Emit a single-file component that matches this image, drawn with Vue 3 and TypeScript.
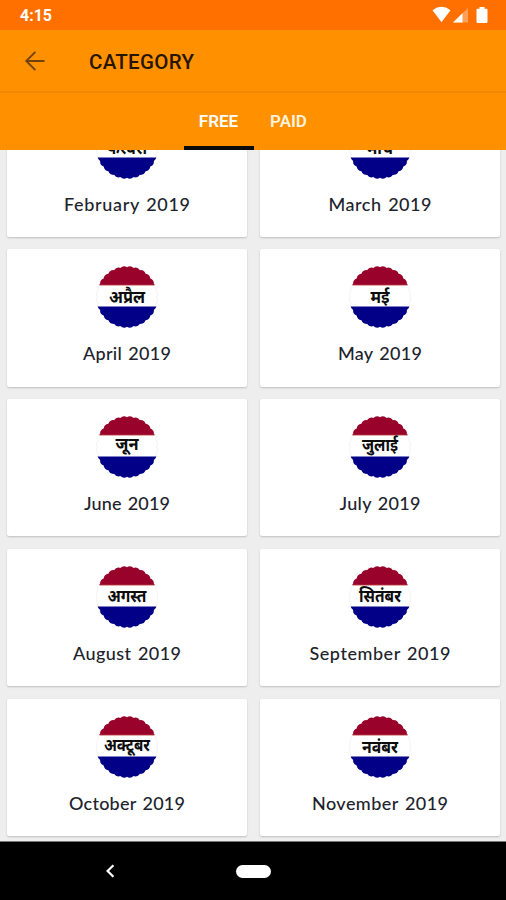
<script setup lang="ts">
interface Month {
  label: string
  labelWidth: number
  hindi: string
  hindiWidth: number
  baseline: number
}

const months: Month[] = [
  { label: 'February 2019', labelWidth: 126, hindi: 'फरवरी', hindiWidth: 40, baseline: 36.5 },
  { label: 'March 2019', labelWidth: 103, hindi: 'मार्च', hindiWidth: 26, baseline: 36.5 },
  { label: 'April 2019', labelWidth: 88, hindi: 'अप्रैल', hindiWidth: 36, baseline: 37 },
  { label: 'May 2019', labelWidth: 84, hindi: 'मई', hindiWidth: 19, baseline: 37 },
  { label: 'June 2019', labelWidth: 86, hindi: 'जून', hindiWidth: 23, baseline: 34 },
  { label: 'July 2019', labelWidth: 81, hindi: 'जुलाई', hindiWidth: 36, baseline: 35 },
  { label: 'August 2019', labelWidth: 108, hindi: 'अगस्त', hindiWidth: 39, baseline: 36 },
  { label: 'September 2019', labelWidth: 141, hindi: 'सितंबर', hindiWidth: 42, baseline: 36 },
  { label: 'October 2019', labelWidth: 116, hindi: 'अक्टूबर', hindiWidth: 46, baseline: 34.5 },
  { label: 'November 2019', labelWidth: 136, hindi: 'नवंबर', hindiWidth: 36, baseline: 37 },
]

// Scalloped outline of the badge: a ring of shallow outward arcs.
const scallops = 28
const point = (i: number): string => {
  const a = (i / scallops) * Math.PI * 2
  return `${(31 + 29.8 * Math.cos(a)).toFixed(2)} ${(31 + 29.8 * Math.sin(a)).toFixed(2)}`
}
const outline =
  `M${point(0)}` +
  Array.from({ length: scallops }, (_, i) => `A5.5 5.5 0 0 1 ${point(i + 1)}`).join('') +
  'Z'
</script>

<template>
  <div class="screen">
    <header class="status">
      <span class="clock">4:15</span>
      <svg class="indicators" width="58" height="20" viewBox="0 0 58 20">
        <path d="M1.5 5.2Q10.5-1.5 19.5 5.2L10.8 16.8Q10.5 17.2 10.2 16.8Z" fill="#fff" />
        <path d="M37 3V17.5H22Z" fill="#ff9f58" />
        <path d="M31.5 8.2V17.5H22Z" fill="#fff" />
        <path d="M48.5 2h5v1.8h2q1 0 1 1v12q0 1.2-1.2 1.2h-8.6q-1.2 0-1.2-1.2v-12q0-1 1-1h2z" fill="#fff" />
      </svg>
    </header>
    <div class="toolbar">
      <svg class="back" width="22" height="22" viewBox="0 0 22 22">
        <path d="M20.5 11H2.2M11.4 1.8L2.2 11L11.4 20.2" fill="none" stroke="#70420a" stroke-width="1.8" />
      </svg>
      <h1 class="title">CATEGORY</h1>
    </div>
    <nav class="tabs">
      <button class="tab active">FREE</button>
      <button class="tab">PAID</button>
    </nav>
    <main class="list">
      <div class="grid">
        <article v-for="m in months" :key="m.label" class="card">
          <svg class="badge" width="62" height="62" viewBox="0 0 62 62">
            <defs>
              <clipPath :id="'top-' + m.labelWidth"><rect width="62" height="19" /></clipPath>
              <clipPath :id="'bottom-' + m.labelWidth"><rect y="40.4" width="62" height="22" /></clipPath>
            </defs>
            <path :d="outline" fill="#fff" stroke="#ededf0" stroke-width=".7" />
            <path :d="outline" fill="#98022b" :clip-path="`url(#top-${m.labelWidth})`" />
            <path :d="outline" fill="#020087" :clip-path="`url(#bottom-${m.labelWidth})`" />
            <path d="M3.5 19.2H58.5" stroke="#c9655a" stroke-width=".8" />
            <text
              class="hindi"
              :x="31 - m.hindiWidth / 2"
              :y="m.baseline"
              :textLength="m.hindiWidth"
              lengthAdjust="spacingAndGlyphs"
            >{{ m.hindi }}</text>
          </svg>
          <svg class="caption" width="200" height="30" viewBox="0 0 200 30">
            <text
              class="label"
              :x="100 - m.labelWidth / 2"
              y="20"
              :textLength="m.labelWidth"
              lengthAdjust="spacing"
            >{{ m.label }}</text>
          </svg>
        </article>
      </div>
    </main>
    <footer class="navbar">
      <svg class="nav-back" width="12" height="16" viewBox="0 0 12 16">
        <path d="M9.4 2.2L3.6 8L9.4 13.8" fill="none" stroke="#fff" stroke-width="2.2" />
      </svg>
      <span class="home"></span>
      <span class="nav-space"></span>
    </footer>
  </div>
</template>

<style>
body {
  margin: 0;
}
</style>

<style scoped>
.screen {
  display: flex;
  flex-direction: column;
  width: 506px;
  height: 900px;
  overflow: hidden;
  background: #eee;
  font-family: Roboto, 'Liberation Sans', sans-serif;
}
.status {
  flex: none;
  display: flex;
  align-items: center;
  justify-content: space-between;
  box-sizing: border-box;
  height: 30px;
  padding: 2px 17px 0 20px;
  background: #ff7000;
}
.clock {
  color: #fff;
  font-size: 16px;
  font-weight: 700;
  line-height: 28px;
}
.indicators {
  margin-top: -3px;
}
.toolbar {
  flex: none;
  display: flex;
  align-items: center;
  box-sizing: border-box;
  height: 63px;
  padding-left: 24px;
  background: #ff9100;
  border-bottom: 2px solid #f48702;
}
.title {
  margin: 2px 0 0 43px;
  color: #261500;
  font-size: 20.5px;
  font-weight: 500;
  letter-spacing: 0.3px;
  line-height: 24px;
}
.tabs {
  flex: none;
  display: flex;
  justify-content: center;
  height: 57px;
  padding-left: 1px;
  background: #ff9100;
}
.tab {
  box-sizing: border-box;
  width: 70px;
  height: 57px;
  padding: 3px 0 0;
  border: 0;
  border-bottom: 4px solid transparent;
  background: none;
  color: #fff2df;
  font-family: inherit;
  font-size: 17px;
  font-weight: 600;
}
.tab.active {
  border-bottom-color: #0b0b0b;
  color: #fff;
}
.list {
  flex: 1;
  min-height: 0;
  display: flex;
  flex-direction: column;
  justify-content: flex-end;
  overflow: hidden;
  padding: 0 6px 5px 7px;
  border-bottom: 1px solid #777;
}
.grid {
  flex: none;
  display: grid;
  grid-template-columns: 240px 240px;
  column-gap: 13px;
  row-gap: 12.5px;
}
.card {
  display: flex;
  flex-direction: column;
  align-items: center;
  box-sizing: border-box;
  height: 137.3px;
  padding-top: 17px;
  background: #fff;
  border-radius: 2px;
  box-shadow: 0 1px 2px rgba(0, 0, 0, 0.2);
}
.badge {
  flex: none;
}
.caption {
  flex: none;
  margin-top: 12px;
}
.hindi {
  font-family: 'Noto Sans Devanagari', 'Noto Sans', sans-serif;
  font-size: 17.5px;
  font-weight: 700;
  fill: #0c0c0c;
}
.label {
  font-family: Lato, 'Noto Sans', sans-serif;
  font-size: 18px;
  font-weight: 500;
  word-spacing: 1.5px;
  fill: #20232c;
}
.navbar {
  flex: none;
  display: flex;
  align-items: center;
  justify-content: space-between;
  box-sizing: border-box;
  height: 58px;
  padding: 0 103px 0 104px;
  background: #000;
}
.home {
  width: 35px;
  height: 13px;
  border-radius: 7px;
  background: #fff;
}
.nav-space {
  width: 12px;
}
</style>
